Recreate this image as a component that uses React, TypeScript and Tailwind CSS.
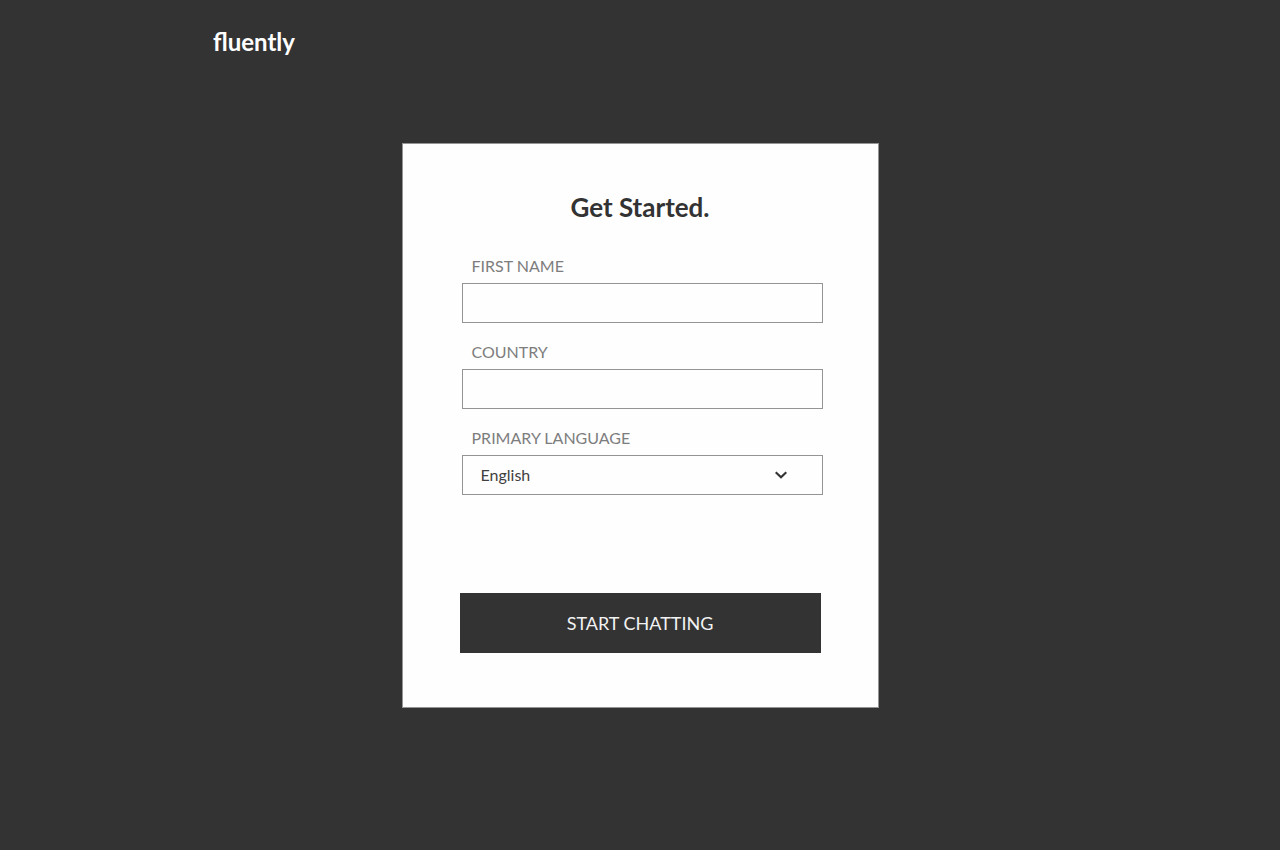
import { useId, useState } from 'react';
import type { InputHTMLAttributes } from 'react';

const labelStyle = 'pl-[10px] text-base leading-6 text-[#7d7d7d]';
const boxStyle =
  'h-10 w-full rounded-none border border-[#949494] bg-transparent px-[18px] text-base text-[#404040] outline-none focus:border-[#333333]';

const languages = ['English', 'Español', 'Français', 'Deutsch', 'Italiano', 'Português'];

function TextField({ label, ...props }: { label: string } & InputHTMLAttributes<HTMLInputElement>) {
  const id = useId();
  return (
    <div className="flex flex-col gap-[5px]">
      <label htmlFor={id} className={labelStyle}>
        {label}
      </label>
      <input id={id} type="text" className={boxStyle} {...props} />
    </div>
  );
}

function LanguageField() {
  const id = useId();
  const [language, setLanguage] = useState('English');
  return (
    <div className="flex flex-col gap-[5px]">
      <label htmlFor={id} className={labelStyle}>
        PRIMARY LANGUAGE
      </label>
      <div className="relative">
        <select
          id={id}
          value={language}
          onChange={(e) => setLanguage(e.target.value)}
          className={`${boxStyle} appearance-none`}
        >
          {languages.map((name) => (
            <option key={name}>{name}</option>
          ))}
        </select>
        <svg
          aria-hidden="true"
          viewBox="0 0 12 8"
          className="pointer-events-none absolute top-4 right-9 h-2 w-3"
          fill="none"
          stroke="#333333"
          strokeWidth="2.2"
        >
          <path d="M0.7 1.2 L6 6.3 L11.3 1.2" />
        </svg>
      </div>
    </div>
  );
}

export default function App() {
  return (
    <div className="min-h-screen bg-[#333333] px-4 pb-16 font-['Lato','Open_Sans',sans-serif]">
      <header className="mx-auto max-w-[854px] pt-[26px]">
        <a href="#" className="text-2xl leading-8 font-bold text-white">
          fluently
        </a>
      </header>
      <main className="pt-[85px]">
        <form
          onSubmit={(e) => e.preventDefault()}
          className="mx-auto max-w-[477px] border border-[#949494] bg-[#fefefe] pt-[47px] pb-[54px]"
        >
          <h1 className="text-center text-[26px] leading-8 font-bold text-[#333333]">Get Started.</h1>
          <div className="mt-[31px] flex flex-col gap-[17px] pr-[55px] pl-[59px]">
            <TextField label="FIRST NAME" name="firstName" />
            <TextField label="COUNTRY" name="country" />
            <LanguageField />
          </div>
          <div className="mt-[98px] px-[57px]">
            <button type="submit" className="h-[60px] w-full bg-[#333333] text-lg text-[#f2f2f2]">
              START CHATTING
            </button>
          </div>
        </form>
      </main>
    </div>
  );
}
